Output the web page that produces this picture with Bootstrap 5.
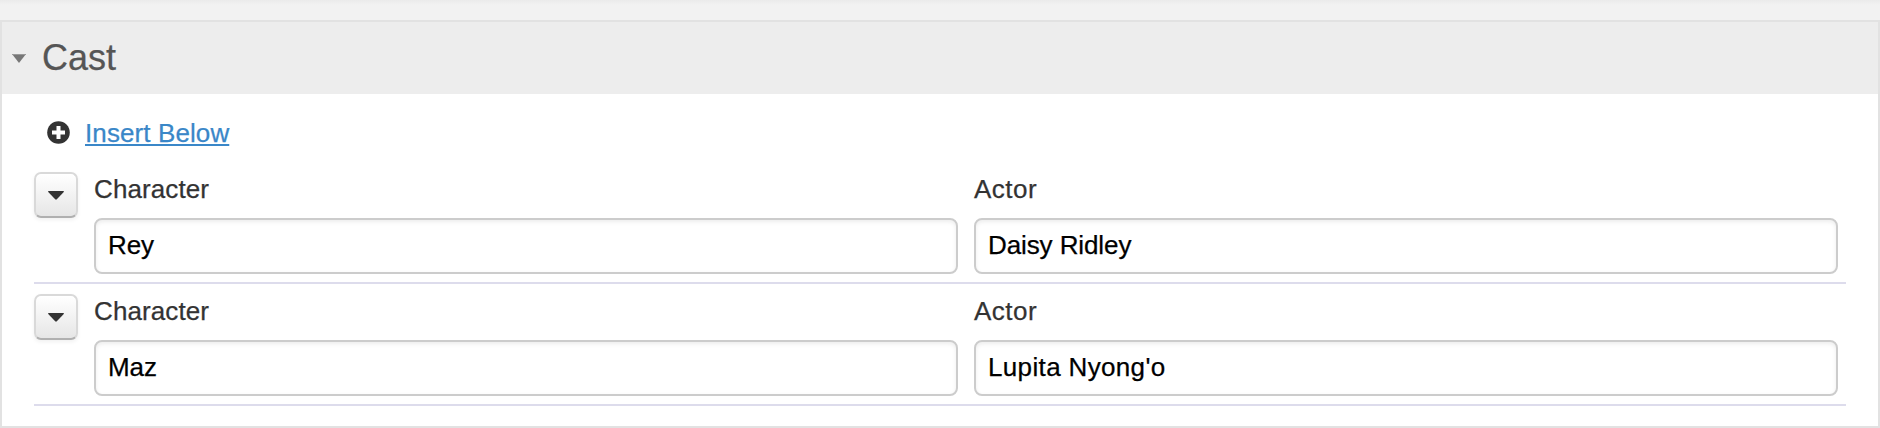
<!DOCTYPE html>
<html lang="en">
<head>
<meta charset="utf-8">
<meta name="viewport" content="width=device-width, initial-scale=1">
<title>Cast</title>
<link href="https://cdn.jsdelivr.net/npm/bootstrap@5.3.0/dist/css/bootstrap.min.css" rel="stylesheet">
<style>
  body {
    font: 26px/30px "Liberation Sans", Arial, sans-serif;
    color: #333;
    background: #f2f2f2 linear-gradient(#ebebeb, #f2f2f2 5px) no-repeat;
    padding-top: 20px;
    overflow: hidden;
    -webkit-text-stroke: .25px currentColor;
  }
  .cast-panel { border: 2px solid #e2e2e2; border-radius: 0; height: 408px; color: #333; }
  .cast-head { height: 72px; background: #ededed; border: 0; border-radius: 0 !important; padding: 0 0 0 10px; }
  .cast-head h2 { font-size: 36px; line-height: 40px; color: #555; font-weight: 400; margin-left: 16px; }
  .cast-body { padding: 0 32px; }
  .insert-bar { height: 68px; padding: 19px 0 0 13px; }
  .insert-bar svg { margin-top: 8px; }
  .insert-link { color: #3a87c8; margin: 5px 0 0 15px; letter-spacing: .1px; text-decoration-thickness: 2px; text-underline-offset: 2px; text-decoration-skip-ink: none; }
  .cast-row { height: 122px; border-bottom: 2px solid #dddcec; padding-top: 10px; gap: 16px; }
  .menu-btn {
    width: 44px; height: 46px; border: 2px solid #d9d9d9; border-bottom-color: #b0b0b0; border-radius: 7px;
    background: linear-gradient(#fff, #e6e6e6); box-shadow: 0 2px 4px rgba(0,0,0,.06), inset 0 1px 0 #fff;
  }
  .fields { --bs-gutter-x: 16px; margin-right: 0; }
  .fields label { height: 46px; padding-top: 2px; letter-spacing: .1px; }
  .fields .actor-label { letter-spacing: .5px; }
  .fields .form-control {
    height: 56px; border: 2px solid #ccc; border-radius: 8px; padding: 0 12px 2px;
    font-size: 26px; line-height: 30px; color: #000; box-shadow: inset 0 2px 4px rgba(0,0,0,.075);
    letter-spacing: -.1px;
  }
  .fields .wide-name { letter-spacing: .35px; }
</style>
</head>
<body>
<section class="card cast-panel">
  <div class="card-header cast-head d-flex align-items-center">
    <svg width="14" height="9" viewBox="0 0 14 9"><path d="M0 0h14L7 9z" fill="#777"/><path d="M0 0h14v1H0z" fill="#999"/></svg>
    <h2 class="mb-0">Cast</h2>
  </div>
  <div class="card-body cast-body">
    <div class="insert-bar d-flex align-items-start">
      <svg width="23" height="23" viewBox="0 0 23 23"><circle cx="11.5" cy="11.5" r="11.3" fill="#333"/><path d="M9.5 5h4v4.500H18v4h-4.500V18h-4v-4.500H5v-4h4.500z" fill="#fff"/></svg>
      <a href="#" class="insert-link">Insert Below</a>
    </div>
    <div class="cast-row d-flex align-items-start">
      <button type="button" class="btn menu-btn p-0 d-flex align-items-center justify-content-center flex-shrink-0" aria-label="Row menu">
        <svg width="16" height="9" viewBox="0 0 16 9"><path d="M.5 0h15L16 .8 8.600 8.500H7.400L0 .8z" fill="#333"/></svg>
      </button>
      <div class="flex-grow-1">
        <div class="row fields">
          <div class="col-6"><label class="d-block" for="c1">Character</label><input id="c1" class="form-control" value="Rey"></div>
          <div class="col-6"><label class="d-block actor-label" for="a1">Actor</label><input id="a1" class="form-control" value="Daisy Ridley"></div>
        </div>
      </div>
    </div>
    <div class="cast-row d-flex align-items-start">
      <button type="button" class="btn menu-btn p-0 d-flex align-items-center justify-content-center flex-shrink-0" aria-label="Row menu">
        <svg width="16" height="9" viewBox="0 0 16 9"><path d="M.5 0h15L16 .8 8.600 8.500H7.400L0 .8z" fill="#333"/></svg>
      </button>
      <div class="flex-grow-1">
        <div class="row fields">
          <div class="col-6"><label class="d-block" for="c2">Character</label><input id="c2" class="form-control" value="Maz"></div>
          <div class="col-6"><label class="d-block actor-label" for="a2">Actor</label><input id="a2" class="form-control wide-name" value="Lupita Nyong'o"></div>
        </div>
      </div>
    </div>
  </div>
</section>
<script src="https://cdn.jsdelivr.net/npm/bootstrap@5.3.0/dist/js/bootstrap.bundle.min.js"></script>
</body>
</html>
